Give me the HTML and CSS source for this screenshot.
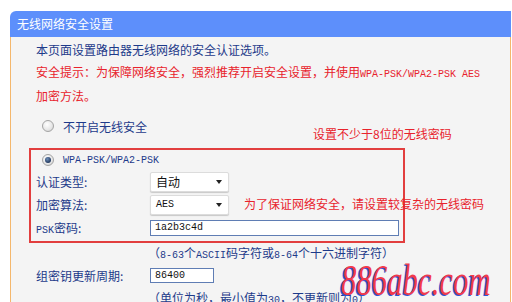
FILE: index.html
```html
<html>
<head>
  <meta charset="utf-8">
  <link rel="stylesheet" href="styles.css">
</head>
<body>
  <div class="panel">
    <div class="panel-head">无线网络安全设置</div>
    <div class="panel-body">
      <p class="intro">本页面设置路由器无线网络的安全认证选项。</p>
      <p class="warn">安全提示：为保障网络安全，强烈推荐开启安全设置，并使用<span class="mono">WPA-PSK/WPA2-PSK AES</span><br>加密方法。</p>

      <div class="radio-row">
        <span class="radio"></span>
        <span>不开启无线安全</span>
      </div>

      <div class="secbox">
        <div class="radio-row first">
          <span class="radio checked"></span>
          <span class="mono">WPA-PSK/WPA2-PSK</span>
        </div>
        <div class="field">
          <span class="label">认证类型:</span>
          <span class="select"><span>自动</span><i class="caret"></i></span>
        </div>
        <div class="field">
          <span class="label">加密算法:</span>
          <span class="select"><span class="mono">AES</span><i class="caret"></i></span>
        </div>
        <div class="field psk">
          <span class="label"><span class="mono">PSK</span>密码:</span>
          <span class="input wide mono">1a2b3c4d</span>
        </div>
      </div>

      <div class="hint">（<span class="mono">8-63</span>个<span class="mono">ASCII</span>码字符或<span class="mono">8-64</span>个十六进制字符）</div>
      <div class="field key">
        <span class="label">组密钥更新周期:</span>
        <span class="input short mono">86400</span>
      </div>
      <div class="hint hint2">（单位为秒，最小值为<span class="mono">30</span>，不更新则为<span class="mono">0</span>）</div>

      <div class="note note-len">设置不少于8位的无线密码</div>
      <div class="note note-safe">为了保证网络安全，请设置较复杂的无线密码</div>
      <div class="watermark">886abc.com</div>
    </div>
  </div>
</body>
</html>
```

FILE: styles.css
```css
html {
  overflow: hidden;
}

body {
  margin: 0;
  background: #ffffff;
  font-family: "Noto Sans CJK SC", "Noto Sans", sans-serif;
  font-size: 12px;
}

.panel {
  margin: 11px 0 0 10px;
  width: 501px;
}

.panel-head {
  height: 26px;
  line-height: 26px;
  padding-left: 7px;
  background: #5d8ffb;
  color: #ffffff;
  border-radius: 6px 0 0 0;
}

.panel-body {
  position: relative;
  height: 300px;
  padding: 2px 0 0 25px;
  background: #f4f4f4;
  border-left: 1px solid #f4b76c;
  border-right: 1px solid #f4b76c;
  color: #1d3a8a;
}

.mono {
  font-family: "Liberation Mono", "DejaVu Sans Mono", monospace;
  font-size: 10px;
}

.intro,
.warn {
  margin: 0;
  line-height: 21px;
  white-space: nowrap;
}

.warn {
  margin-top: 1px;
  color: #e8232c;
}

.radio-row {
  display: flex;
  align-items: center;
  height: 20px;
  margin-top: 10px;
  font-size: 12px;
}

.radio-row.first {
  height: 20px;
  margin-top: 0;
}

.radio {
  width: 10px;
  height: 10px;
  margin: 0 9px 0 6px;
  border: 1px solid #a4a4a4;
  border-radius: 50%;
  background: radial-gradient(circle at 40% 35%, #ffffff 0%, #e6e6e6 60%, #c8c8c8 100%);
  position: relative;
}

.radio.checked::after {
  content: "";
  position: absolute;
  left: 2px;
  top: 2px;
  width: 6px;
  height: 6px;
  border-radius: 50%;
  background: radial-gradient(circle at 40% 35%, #6f8fb8 0%, #243a60 70%);
}

.secbox {
  width: 367px;
  margin: 12px 0 0 -7px;
  padding: 0 0 2px 5px;
  border: 2px solid #e23e3e;
}

.field {
  display: flex;
  align-items: center;
  height: 23px;
}

.label {
  width: 114px;
  flex: none;
}

.select {
  display: flex;
  align-items: center;
  box-sizing: border-box;
  width: 79px;
  height: 20px;
  padding-left: 5px;
  background: #ffffff;
  border: 1px solid #dcdcdc;
  border-radius: 2px;
  box-shadow: 0 1px 1px #c8c8c8;
  color: #111111;
}

.caret {
  margin-left: auto;
  margin-right: 6px;
  border-top: 4px solid #222222;
  border-left: 3px solid transparent;
  border-right: 3px solid transparent;
}

.input {
  box-sizing: border-box;
  height: 16px;
  line-height: 14px;
  padding-left: 4px;
  background: #ffffff;
  border: 1px solid #5f7db4;
  color: #111111;
}

.input.wide {
  width: 249px;
}

.input.short {
  width: 64px;
  height: 15px;
  line-height: 13px;
}

.hint {
  height: 19px;
  line-height: 19px;
  padding-left: 112px;
  white-space: nowrap;
}

.field.key {
  height: 22px;
  margin-top: 2px;
}

.hint2 {
  margin-top: 2px;
}

.note {
  position: absolute;
  line-height: 16px;
  color: #e8232c;
  white-space: nowrap;
}

.note-len {
  left: 302px;
  top: 89px;
}

.note-safe {
  left: 233px;
  top: 159px;
}

.watermark {
  position: absolute;
  left: 330px;
  top: 222px;
  font-family: "Liberation Serif", serif;
  font-style: italic;
  font-size: 44px;
  line-height: 44px;
  color: #f23a4c;
  text-shadow: -2px 1px 0 #2f52d6;
  transform: scaleX(0.7);
  transform-origin: left top;
  white-space: nowrap;
}
```
